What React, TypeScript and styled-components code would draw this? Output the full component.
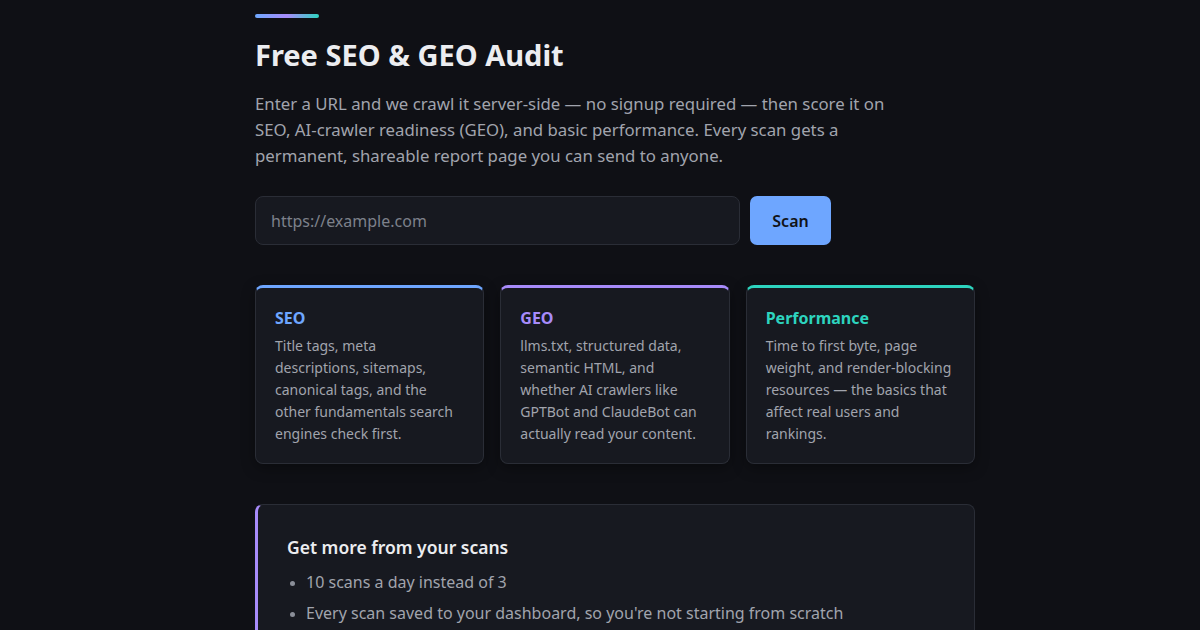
import React from 'react'
import styled, { createGlobalStyle } from 'styled-components'

const GlobalStyle = createGlobalStyle`
  html, body {
    margin: 0;
    padding: 0;
    background: #0f1015;
    color: #e6e7ea;
    font-family: 'Noto Sans', 'Open Sans', sans-serif;
  }
`

const Page = styled.main`
  max-width: 750px;
  margin: 0 auto;
  padding: 14px 0 40px 30px;
  box-sizing: border-box;
`

const AccentBar = styled.div`
  width: 64px;
  height: 4px;
  border-radius: 2px;
  background: linear-gradient(90deg, #6ea8fe, #a78bfa, #2dd4bf);
`

const Title = styled.h1`
  margin: 17px 0 0;
  font-size: 29px;
  line-height: 40px;
  font-weight: 700;
  color: #ecedf0;
`

const Intro = styled.p`
  margin: 16px 0 0;
  max-width: 650px;
  font-size: 16.8px;
  line-height: 26px;
  color: #a1a4ad;
`

const ScanForm = styled.form`
  display: flex;
  gap: 10px;
  margin-top: 27px;
`

const UrlInput = styled.input`
  width: 485px;
  height: 49px;
  box-sizing: border-box;
  padding: 0 15px;
  border: 1px solid #2a2d36;
  border-radius: 8px;
  background: #171920;
  color: #e6e7ea;
  font-family: inherit;
  font-size: 16px;
  outline: none;

  &::placeholder {
    color: #7d818b;
  }
`

const ScanButton = styled.button`
  width: 81px;
  height: 49px;
  border: 0;
  border-radius: 7px;
  background: #6ea6ff;
  color: #111318;
  font-family: inherit;
  font-size: 16px;
  font-weight: 600;
  cursor: pointer;
`

const Cards = styled.section`
  display: grid;
  grid-template-columns: repeat(3, 1fr);
  gap: 16px;
  margin-top: 40px;
`

const Card = styled.div<{ $accent: string }>`
  border: 1px solid #2a2d36;
  border-top: 3px solid ${(p) => p.$accent};
  border-radius: 8px;
  background: #171920;
  padding: 19px 21px 18px 19px;
  box-shadow: 0 4px 14px rgba(0, 0, 0, 0.35);
`

const CardTitle = styled.h3<{ $accent: string }>`
  margin: 0;
  font-size: 16px;
  line-height: 22px;
  font-weight: 700;
  color: ${(p) => p.$accent};
`

const CardText = styled.p`
  margin: 6px 0 0;
  font-size: 14px;
  line-height: 22px;
  color: #a1a4ad;
`

const Upsell = styled.section`
  margin-top: 40px;
  border: 1px solid #2a2d36;
  border-left: 3px solid #a78bfa;
  border-radius: 8px;
  background: #171920;
  padding: 30px 29px 24px;
`

const UpsellTitle = styled.h3`
  margin: 0;
  font-size: 17.5px;
  line-height: 24px;
  font-weight: 600;
  color: #ecedf0;
`

const Perks = styled.ul`
  margin: 8px 0 0;
  padding-left: 19px;
`

const Perk = styled.li`
  font-size: 16px;
  line-height: 31px;
  color: #a1a4ad;

  &::marker {
    color: #8a8e98;
    font-size: 13px;
  }
`

const cards = [
  {
    title: 'SEO',
    accent: '#6ea6ff',
    text: 'Title tags, meta descriptions, sitemaps, canonical tags, and the other fundamentals search engines check first.',
  },
  {
    title: 'GEO',
    accent: '#a78bfa',
    text: 'llms.txt, structured data, semantic HTML, and whether AI crawlers like GPTBot and ClaudeBot can actually read your content.',
  },
  {
    title: 'Performance',
    accent: '#2dd4bf',
    text: 'Time to first byte, page weight, and render-blocking resources — the basics that affect real users and rankings.',
  },
]

export default function App() {
  return (
    <>
      <GlobalStyle />
      <Page>
        <AccentBar />
        <Title>Free SEO &amp; GEO Audit</Title>
        <Intro>
          Enter a URL and we crawl it server-side — no signup required — then score it on SEO,
          AI-crawler readiness (GEO), and basic performance. Every scan gets a permanent,
          shareable report page you can send to anyone.
        </Intro>
        <ScanForm onSubmit={(e) => e.preventDefault()}>
          <UrlInput type="url" placeholder="https://example.com" />
          <ScanButton type="submit">Scan</ScanButton>
        </ScanForm>
        <Cards>
          {cards.map((c) => (
            <Card key={c.title} $accent={c.accent}>
              <CardTitle $accent={c.accent}>{c.title}</CardTitle>
              <CardText>{c.text}</CardText>
            </Card>
          ))}
        </Cards>
        <Upsell>
          <UpsellTitle>Get more from your scans</UpsellTitle>
          <Perks>
            <Perk>10 scans a day instead of 3</Perk>
            <Perk>Every scan saved to your dashboard, so you're not starting from scratch</Perk>
            <Perk>Track changes between scans over time</Perk>
          </Perks>
        </Upsell>
      </Page>
    </>
  )
}
